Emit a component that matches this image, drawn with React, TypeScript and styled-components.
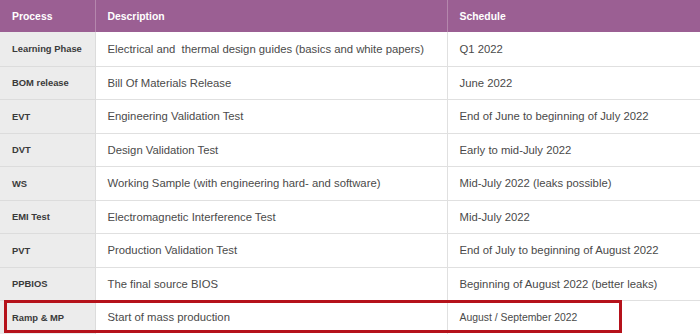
import React from "react";
import styled, { createGlobalStyle } from "styled-components";

const GlobalStyle = createGlobalStyle`
  html, body {
    margin: 0;
    padding: 0;
    background: #ffffff;
  }
  body {
    font-family: "Liberation Sans", Arial, sans-serif;
  }
`;

const Wrapper = styled.div`
  position: relative;
  width: 700px;
  height: 334px;
  overflow: hidden;
  background: #ffffff;
`;

const Table = styled.table`
  width: 700px;
  border-collapse: collapse;
  table-layout: fixed;
`;

const HeadCell = styled.th<{ $width: number }>`
  width: ${(p) => p.$width}px;
  height: 32px;
  padding: 0 12px;
  background: #9b5f93;
  color: #ffffff;
  font-size: 10.4px;
  font-weight: bold;
  text-align: left;
  white-space: nowrap;
  border-right: 1px solid #b587ad;
  box-sizing: border-box;

  &:last-child {
    border-right: none;
  }
`;

const Row = styled.tr<{ $height: number }>`
  height: ${(p) => p.$height}px;
`;

const ProcessCell = styled.td`
  padding: 0 12px;
  background: #ececec;
  color: #3a3a3a;
  font-size: 9.4px;
  font-weight: bold;
  white-space: nowrap;
  border-bottom: 1px solid #dcdcdc;
  border-right: 1px solid #dcdcdc;
`;

const TextCell = styled.td<{ $small?: boolean }>`
  padding: 0 12px;
  color: #4a4a4a;
  font-size: ${(p) => (p.$small ? 10.4 : 11.3)}px;
  white-space: pre;
  border-bottom: 1px solid #e0e0e0;
  border-right: 1px solid #e0e0e0;

  &:last-child {
    border-right: none;
  }
`;

// red annotation box drawn over the last row
const Highlight = styled.div`
  position: absolute;
  left: 4px;
  top: 300px;
  width: 618px;
  height: 33px;
  border: 3px solid #b5121b;
  box-sizing: border-box;
  pointer-events: none;
`;

const rows = [
  ["Learning Phase", "Electrical and  thermal design guides (basics and white papers)", "Q1 2022"],
  ["BOM release", "Bill Of Materials Release", "June 2022"],
  ["EVT", "Engineering Validation Test", "End of June to beginning of July 2022"],
  ["DVT", "Design Validation Test", "Early to mid-July 2022"],
  ["WS", "Working Sample (with engineering hard- and software)", "Mid-July 2022 (leaks possible)"],
  ["EMI Test", "Electromagnetic Interference Test", "Mid-July 2022"],
  ["PVT", "Production Validation Test", "End of July to beginning of August 2022"],
  ["PPBIOS", "The final source BIOS", "Beginning of August 2022 (better leaks)"],
  ["Ramp & MP", "Start of mass production", "August / September 2022"],
];

export default function App() {
  return (
    <Wrapper>
      <GlobalStyle />
      <Table>
        <thead>
          <tr>
            <HeadCell $width={95}>Process</HeadCell>
            <HeadCell $width={352}>Description</HeadCell>
            <HeadCell $width={253}>Schedule</HeadCell>
          </tr>
        </thead>
        <tbody>
          {rows.map(([process, desc, schedule], i) => (
            <Row key={process} $height={i % 2 === 0 ? 34 : 33}>
              <ProcessCell>{process}</ProcessCell>
              <TextCell>{desc}</TextCell>
              <TextCell $small={i === rows.length - 1}>{schedule}</TextCell>
            </Row>
          ))}
        </tbody>
      </Table>
      <Highlight />
    </Wrapper>
  );
}
